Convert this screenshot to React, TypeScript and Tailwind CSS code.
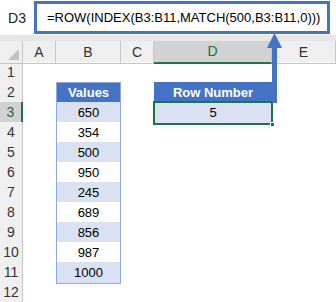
const cols = ["A", "B", "C", "D", "E"]
const values = ["650", "354", "500", "950", "245", "689", "856", "987", "1000"]
const grid = "grid grid-cols-[23px_33px_65px_33px_118px_1fr]"

const RowHeader = ({ n, active }: { n: number, active: boolean }) => (
    <div className={active
        ? "flex items-center justify-center text-[14px] bg-[#d2d2d2] text-[#1e6b41] border-b border-[#c6c6c6] border-r-2 border-r-[#217346]"
        : "flex items-center justify-center text-[14px] bg-[#efefef] text-[#333] border-b border-r border-[#c6c6c6]"}>
        {n}
    </div>
)

const ValuesCell = ({ row }: { row: number }) => {
    if (row === 2)
        return <div className="flex items-center justify-center bg-[#4472c4] text-white font-bold text-[13px] border border-[#8ea9db]">Values</div>
    if (row >= 3 && row <= 11) {
        const alt = row % 2 === 1
        return <div className={`flex items-center justify-center text-black border-x border-b border-[#8ea9db] ${alt ? "bg-[#d9e1f2]" : "bg-white"}`}>
            {values[row - 3]}
        </div>
    }
    return <div />
}

const ResultCell = ({ row }: { row: number }) => {
    if (row === 2)
        return <div className="flex items-center justify-center bg-[#4472c4] text-white font-bold text-[13px]">Row Number</div>
    if (row === 3)
        return <div className="relative flex items-center justify-center bg-[#d9e1f2] text-black">
            5
            <div className="absolute -inset-x-[1px] -top-[1px] -bottom-[1px] border-2 border-[#217346]" />
            <div className="absolute -right-[3px] -bottom-[3px] w-[5px] h-[5px] bg-[#217346] border border-white" />
        </div>
    return <div />
}

const App = () => {
    const rows = Array.from({ length: 12 }, (_, i) => i + 1)

    return <div className="relative w-[336px] h-[302px] overflow-hidden bg-white font-['Liberation_Sans',Arial,sans-serif] text-[13px]">
        {/* formula bar */}
        <div className="flex h-[35px] pt-[1px]">
            <div className="w-[34px] flex items-center justify-center text-[14px] text-[#222]">D3</div>
            <div className="flex-1 mr-[6px] h-[33px] border-[3px] border-[#4472c4] flex items-center pl-[10px] text-[13px] text-black whitespace-nowrap">
                =ROW(INDEX(B3:B11,MATCH(500,B3:B11,0)))
            </div>
        </div>
        <div className="h-[6px] bg-[#e6e6e6]" />

        {/* column headers */}
        <div className={`${grid} h-[21px] bg-[#efefef] text-[14px] text-[#333]`}>
            <div className="relative border-r border-b border-[#c6c6c6]">
                <div className="absolute right-[3px] bottom-[3px] w-0 h-0 border-l-[11px] border-l-transparent border-b-[11px] border-b-[#c0c0c0]" />
            </div>
            {cols.map(c => c === "D"
                ? <div key={c} className="flex items-center justify-center bg-[#d2d2d2] text-[#1e6b41] border-r border-[#c6c6c6] border-b-2 border-b-[#217346]">{c}</div>
                : <div key={c} className="flex items-center justify-center border-r border-b border-[#c6c6c6]">{c}</div>
            )}
        </div>

        {/* sheet rows */}
        {rows.map(r => (
            <div key={r} className={`${grid} h-[20px]`}>
                <RowHeader n={r} active={r === 3} />
                <div />
                <ValuesCell row={r} />
                <div />
                <ResultCell row={r} />
                <div />
            </div>
        ))}

        {/* callout arrow */}
        <svg className="absolute left-[266px] top-[33px]" width="17" height="71" viewBox="0 0 17 71">
            <polygon points="8.5,0 1,15 16,15" fill="#4472c4" />
            <rect x="6" y="14" width="5" height="56" fill="#4472c4" />
        </svg>
    </div>
}
export default App
